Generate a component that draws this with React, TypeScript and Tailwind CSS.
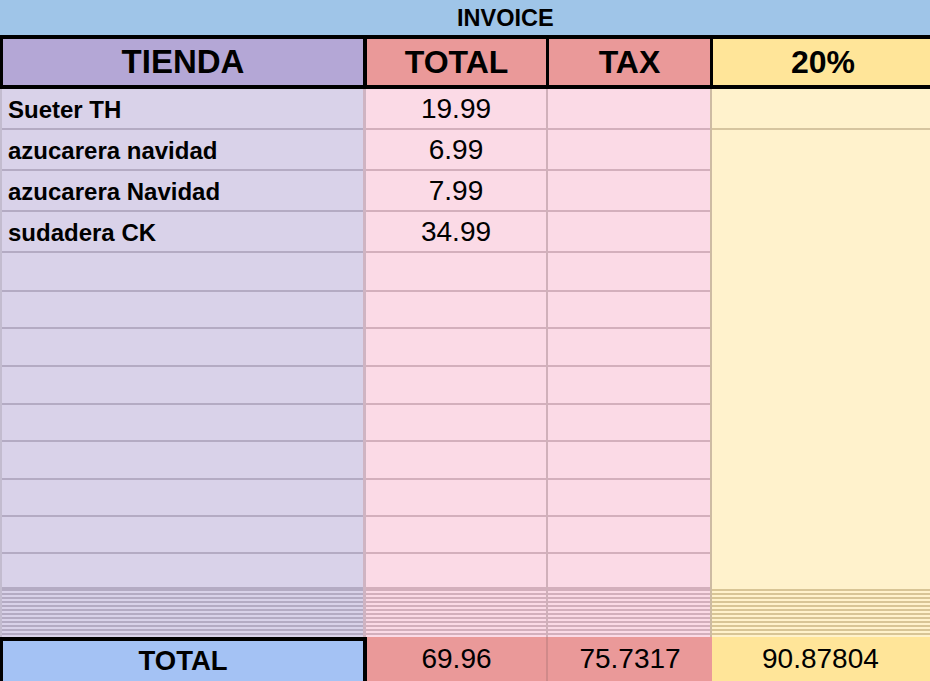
const font = { fontFamily: '"Liberation Sans", Arial, sans-serif' };

// row heights (px) including the 2px bottom grid line
const itemRows = [
  { name: "Sueter TH", total: "19.99" },
  { name: "azucarera navidad", total: "6.99" },
  { name: "azucarera Navidad", total: "7.99" },
  { name: "sudadera CK", total: "34.99" },
];
const emptyRows = [39, 37, 38, 38, 37, 38, 37, 37, 35];
const squashed = Array.from({ length: 12 });

function Squashed({ line }: { line: string }) {
  return (
    <div className="flex flex-col">
      {squashed.map((_, i) => (
        <div key={i} className={`h-[4px] border-t-2 ${line}`} />
      ))}
    </div>
  );
}

export default function App() {
  return (
    <div className="w-[930px] h-[681px] overflow-hidden bg-white text-black" style={font}>
      {/* Title bar */}
      <div className="h-[35px] bg-[#9fc5e8] flex items-center pl-[457px]">
        <span className="text-[23.5px] font-bold leading-none pt-[2px]">INVOICE</span>
      </div>

      {/* Header */}
      <div className="h-[54px] bg-black flex py-[4px] pl-[3px]">
        <div className="w-[360px] bg-[#b4a7d6] flex items-center justify-center text-[33px] font-bold">TIENDA</div>
        <div className="w-[179px] ml-[4px] bg-[#ea9999] flex items-center justify-center text-[32px] font-bold">TOTAL</div>
        <div className="w-[161px] ml-[3px] bg-[#ea9999] flex items-center justify-center text-[32px] font-bold">TAX</div>
        <div className="flex-1 ml-[3px] bg-[#ffe599] flex items-center justify-start pl-[78px] text-[32px] font-bold">20%</div>
      </div>

      {/* Body */}
      <div className="flex h-[548px]">
        {/* TIENDA */}
        <div className="w-[363px] flex flex-col bg-[#d9d2e9] border-l-2 border-[#c3bccf]">
          {itemRows.map((r) => (
            <div key={r.name} className="h-[41px] border-b-2 border-[#b4abc3] flex items-center pl-[6px] pt-[3px] text-[24px] font-bold">
              {r.name}
            </div>
          ))}
          {emptyRows.map((h, i) => (
            <div key={i} className="border-b-2 border-[#b4abc3]" style={{ height: h }} />
          ))}
          <Squashed line="border-[#b4abc3]" />
        </div>

        {/* TOTAL */}
        <div className="w-[183px] flex flex-col bg-[#fbdae6] border-l-[3px] border-[#cfb4c2]">
          {itemRows.map((r) => (
            <div key={r.name} className="h-[41px] border-b-2 border-[#d3afbc] flex items-center justify-center pt-[1px] text-[28px]">
              {r.total}
            </div>
          ))}
          {emptyRows.map((h, i) => (
            <div key={i} className="border-b-2 border-[#d3afbc]" style={{ height: h }} />
          ))}
          <Squashed line="border-[#d3afbc]" />
        </div>

        {/* TAX */}
        <div className="w-[164px] flex flex-col bg-[#fbdae6] border-l-2 border-[#d0b0ba]">
          {itemRows.map((r) => (
            <div key={r.name} className="h-[41px] border-b-2 border-[#d3afbc]" />
          ))}
          {emptyRows.map((h, i) => (
            <div key={i} className="border-b-2 border-[#d3afbc]" style={{ height: h }} />
          ))}
          <Squashed line="border-[#d3afbc]" />
        </div>

        {/* 20% */}
        <div className="flex-1 flex flex-col bg-[#fff2cc] border-l-2 border-[#cdbba3]">
          <div className="h-[41px] border-b-2 border-[#d6c59f]" />
          <div className="h-[459px]" />
          <Squashed line="border-[#d8c596]" />
        </div>
      </div>

      {/* Totals */}
      <div className="flex h-[44px]">
        <div className="w-[367px] bg-[#a4c2f4] border-l-[3px] border-r-4 border-t-4 border-black flex items-center justify-center text-[27.5px] font-bold">
          TOTAL
        </div>
        <div className="w-[181px] bg-[#ea9999] border-r-2 border-[#d08a8a] flex items-center justify-center text-[28px]">69.96</div>
        <div className="w-[164px] bg-[#ea9999] flex items-center justify-center text-[28px]">75.7317</div>
        <div className="flex-1 bg-[#ffe599] flex items-center pl-[50px] text-[28px]">90.87804</div>
      </div>
    </div>
  );
}
